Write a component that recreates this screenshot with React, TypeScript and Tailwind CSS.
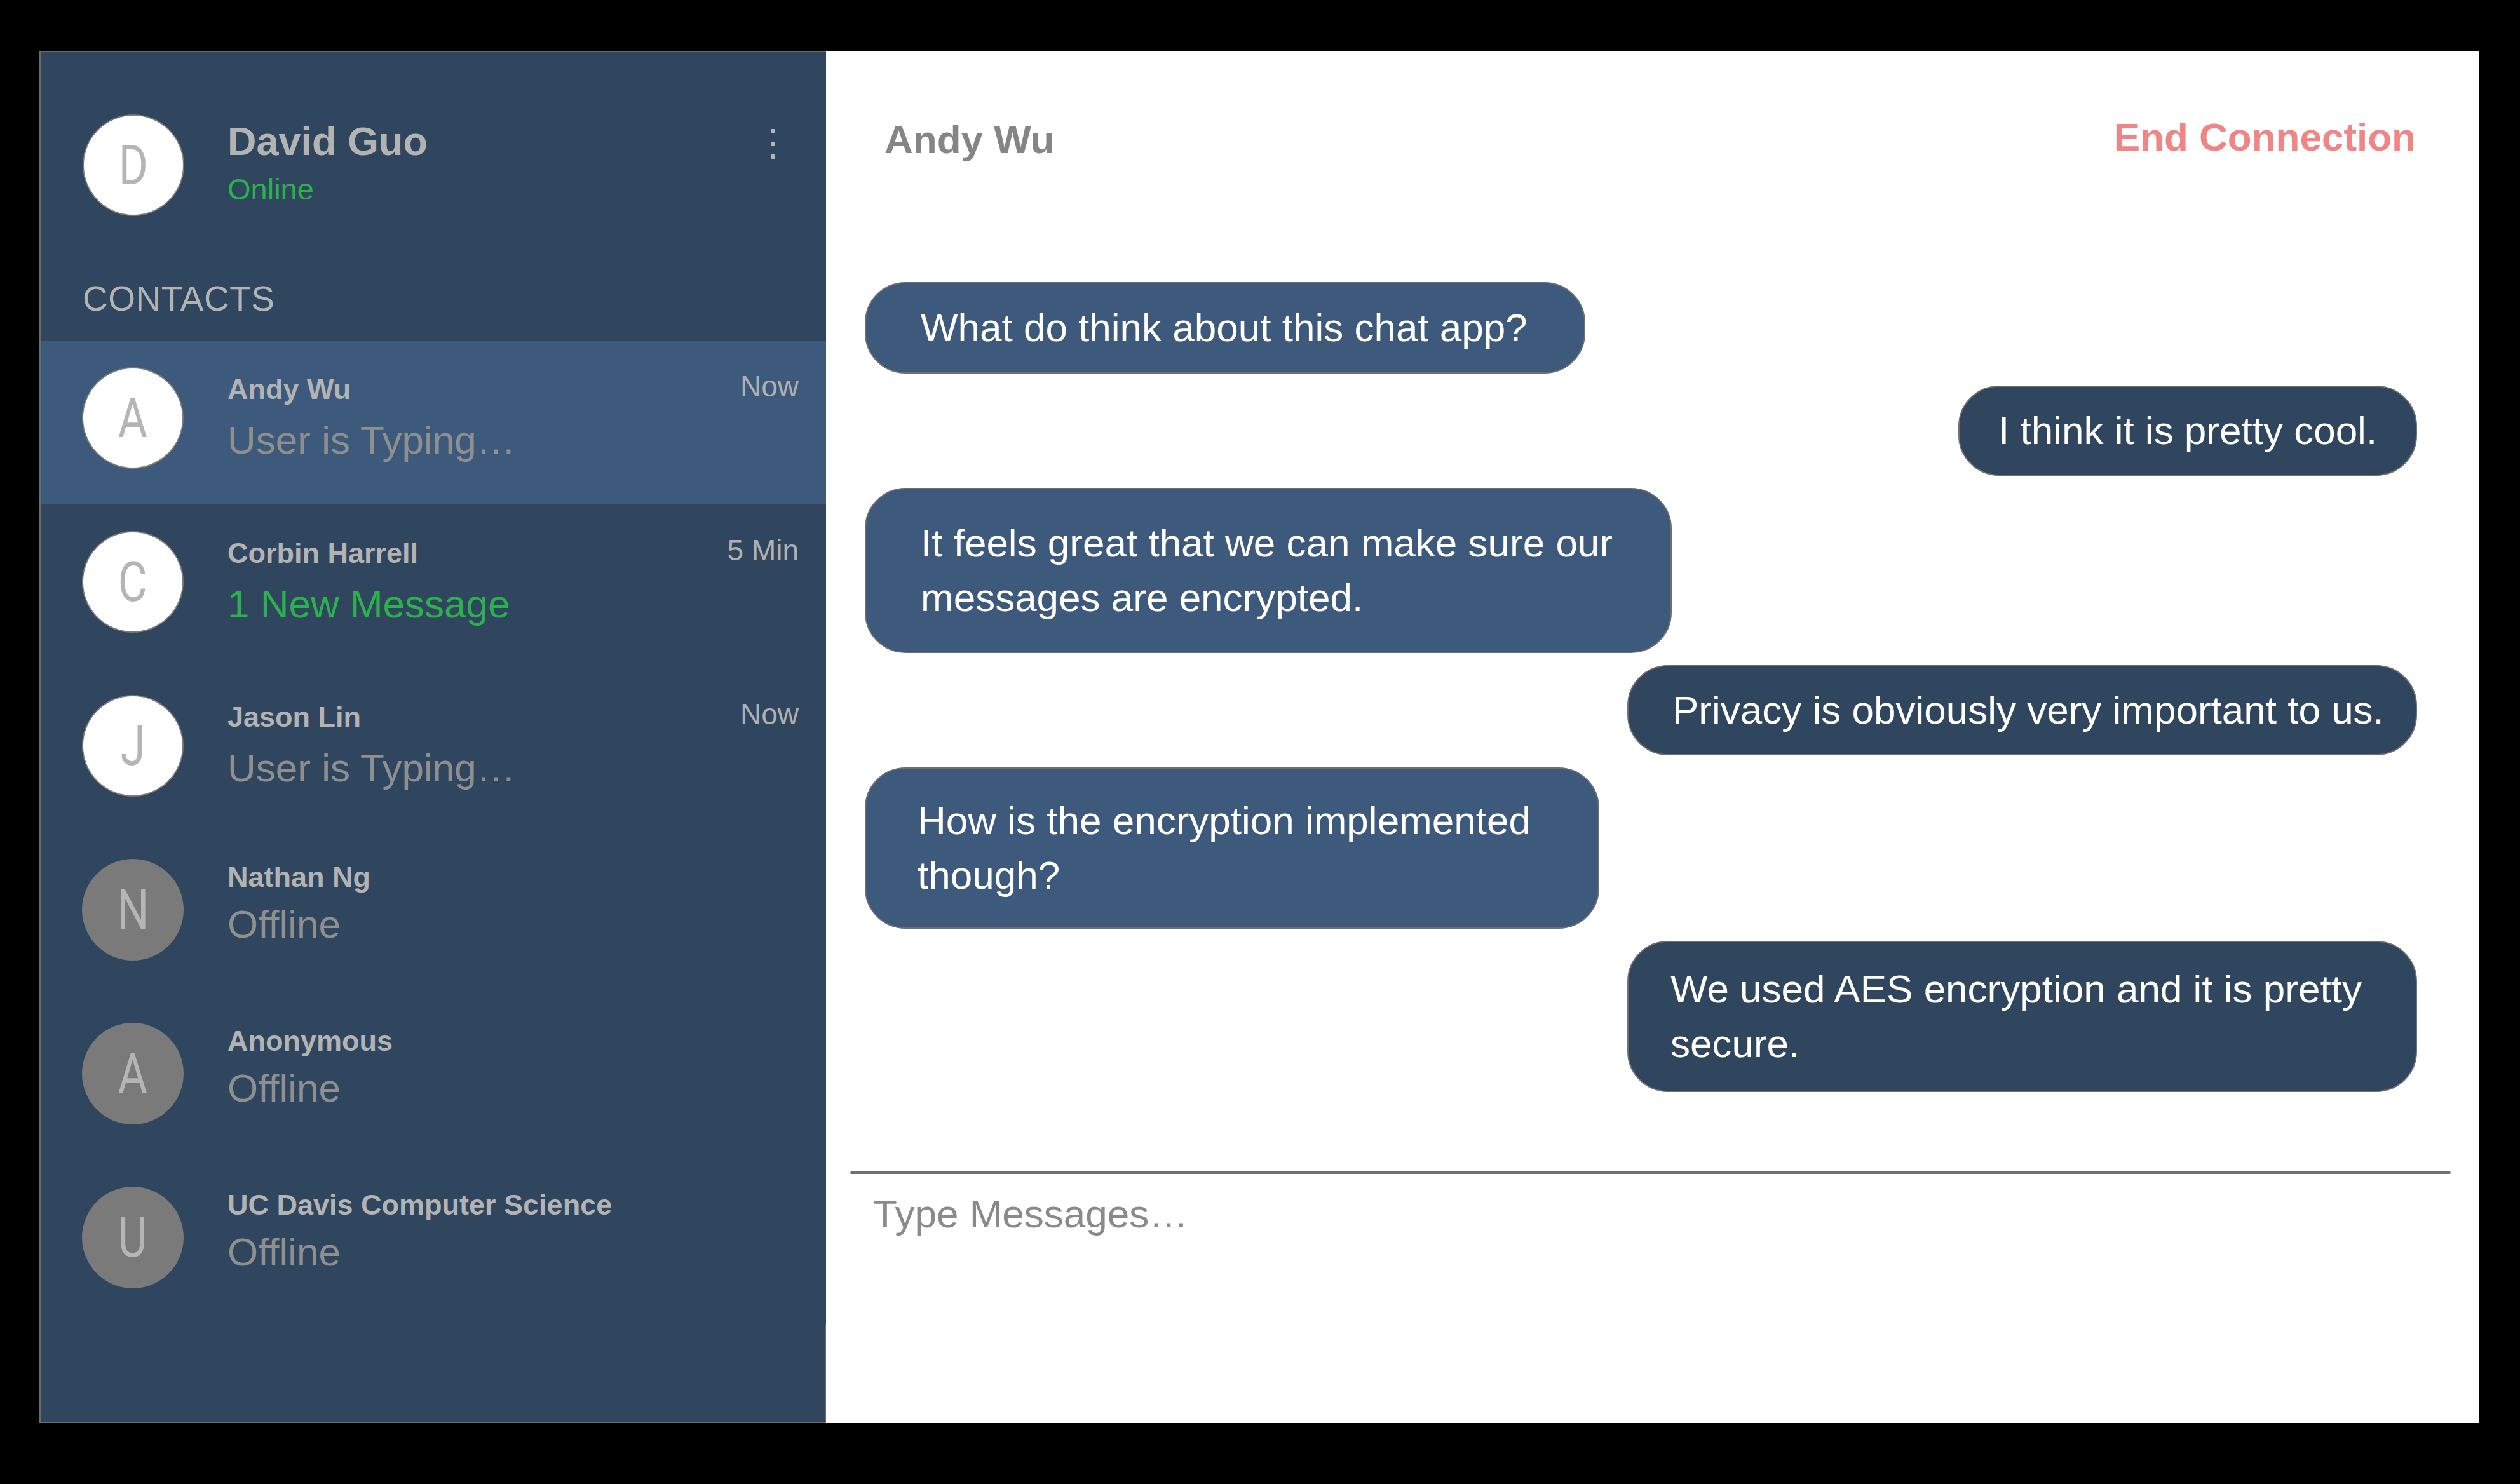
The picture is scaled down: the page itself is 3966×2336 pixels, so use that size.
import React from "react";

type Contact = {
  letter: string;
  name: string;
  status: string;
  time?: string;
  online: boolean;
  selected?: boolean;
  green?: boolean;
};

const contacts: Contact[] = [
  { letter: "A", name: "Andy Wu", status: "User is Typing…", time: "Now", online: true, selected: true },
  { letter: "C", name: "Corbin Harrell", status: "1 New Message", time: "5 Min", online: true, green: true },
  { letter: "J", name: "Jason Lin", status: "User is Typing…", time: "Now", online: true },
  { letter: "N", name: "Nathan Ng", status: "Offline", online: false },
  { letter: "A", name: "Anonymous", status: "Offline", online: false },
  { letter: "U", name: "UC Davis Computer Science", status: "Offline", online: false },
];

function Avatar({ letter, online }: { letter: string; online: boolean }) {
  return (
    <div
      className={
        online
          ? "flex h-[160px] w-[160px] shrink-0 items-center justify-center rounded-full border-2 border-[#7a7a7a] bg-white"
          : "flex h-[160px] w-[160px] shrink-0 items-center justify-center rounded-full bg-[#7a7a7a]"
      }
    >
      <span className="inline-block scale-x-80 font-['Roboto',sans-serif] text-[88px] font-normal leading-none text-[#b5b5b5]">
        {letter}
      </span>
    </div>
  );
}

function ContactRow({ c }: { c: Contact }) {
  return (
    <div
      className={
        c.selected
          ? "flex h-[258px] items-start bg-[#3d5a7c] pl-[65px] pr-[43px]"
          : "flex h-[258px] items-start pl-[65px] pr-[43px]"
      }
    >
      <div className="mt-[42px]">
        <Avatar letter={c.letter} online={c.online} />
      </div>
      <div className="ml-[69px] mt-[45px] flex flex-1 flex-col">
        <div className="flex items-center justify-between">
          <span className="text-[45px] font-bold leading-[52px] text-[#b3b3b3]">{c.name}</span>
          {c.time && (
            <span className="mb-[10px] text-[46px] leading-[54px] text-[#b0b0b0]">{c.time}</span>
          )}
        </div>
        <span
          className={
            c.green
              ? "mt-[12px] text-[62px] leading-[72px] text-[#2bb24c]"
              : "mt-[12px] text-[62px] leading-[72px] text-[#8f8f8f]"
          }
        >
          {c.status}
        </span>
      </div>
    </div>
  );
}

function Sidebar() {
  return (
    <div className="flex w-[1238px] shrink-0 flex-col border-b-2 border-l-2 border-t-2 border-[#6b6b6b] bg-[#2f465e]">
      <div className="flex h-[454px] flex-col pl-[66px]">
        <div className="mt-[98px] flex items-start pr-[80px]">
          <Avatar letter="D" online={true} />
          <div className="ml-[68px] mt-[6px] flex flex-1 flex-col">
            <span className="text-[63px] font-bold leading-[72px] text-[#b3b3b3]">David Guo</span>
            <span className="mt-[12px] text-[47px] leading-[56px] text-[#2bb24c]">Online</span>
          </div>
          <div className="mt-[23px] flex flex-col gap-[13px]">
            <span className="block h-[7px] w-[7px] bg-[#b5b5b5]" />
            <span className="block h-[7px] w-[7px] bg-[#b5b5b5]" />
            <span className="block h-[7px] w-[7px] bg-[#b5b5b5]" />
          </div>
        </div>
        <div className="mt-[98px] text-[55px] leading-[64px] tracking-[0.5px] text-[#b3b3b3]">CONTACTS</div>
      </div>
      <div className="flex flex-col">
        {contacts.map((c, i) => (
          <ContactRow key={i} c={c} />
        ))}
      </div>
      <div className="flex-1 border-r-2 border-[#6b6b6b]" />
    </div>
  );
}

function ChatPanel() {
  return (
    <div className="flex flex-1 flex-col bg-white">
      <div className="flex items-center justify-between pl-[92px] pr-[100px] pt-[100px]">
        <span className="text-[62px] font-bold leading-[72px] text-[#858585]">Andy Wu</span>
        <span className="mb-[8px] text-[62px] font-bold leading-[72px] text-[#f08585]">End Connection</span>
      </div>
      <div className="mt-[184px] flex flex-1 flex-col gap-[19px] pl-[61px] pr-[98px] text-[62px] leading-[86px] text-white">
        <div className="w-[1134px] self-start whitespace-nowrap rounded-[64px] border-2 border-[#6e6e6e] bg-[#3d5a7c] py-[27px] pl-[86px]">
          What do think about this chat app?
        </div>
        <div className="w-[722px] self-end whitespace-nowrap rounded-[64px] border-2 border-[#6e6e6e] bg-[#30465e] py-[26px] pl-[61px]">
          I think it is pretty cool.
        </div>
        <div className="w-[1270px] self-start whitespace-nowrap rounded-[64px] border-2 border-[#6e6e6e] bg-[#3d5a7c] py-[42px] pl-[86px]">
          It feels great that we can make sure our
          <br />
          messages are encrypted.
        </div>
        <div className="w-[1243px] self-end whitespace-nowrap rounded-[64px] border-2 border-[#6e6e6e] bg-[#30465e] py-[26px] pl-[69px]">
          Privacy is obviously very important to us.
        </div>
        <div className="w-[1156px] self-start whitespace-nowrap rounded-[64px] border-2 border-[#6e6e6e] bg-[#3d5a7c] py-[39px] pl-[81px]">
          How is the encryption implemented
          <br />
          though?
        </div>
        <div className="w-[1243px] self-end whitespace-nowrap rounded-[64px] border-2 border-[#6e6e6e] bg-[#30465e] py-[31px] pl-[66px]">
          We used AES encryption and it is pretty
          <br />
          secure.
        </div>
      </div>
      <div className="flex h-[396px] flex-col">
        <div className="ml-[38px] mr-[45px] h-[4px] rounded-full bg-[#707070]" />
        <div className="ml-[74px] mt-[27px] text-[62px] leading-[72px] text-[#8a8a8a]">Type Messages…</div>
      </div>
    </div>
  );
}

export default function App() {
  return (
    <div className="h-[2336px] w-[3966px] bg-black pl-[62px] pt-[80px] font-['Liberation_Sans',Arial,sans-serif]">
      <div className="flex h-[2160px] w-[3840px]">
        <Sidebar />
        <ChatPanel />
      </div>
    </div>
  );
}
